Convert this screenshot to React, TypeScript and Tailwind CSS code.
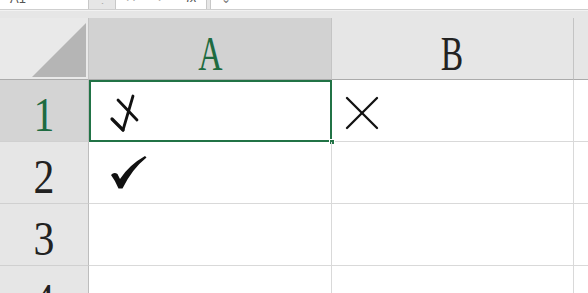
const GREEN = "text-[#1e6b41]";

function ColHeader({ label, selected, w }: { label: string; selected?: boolean; w: string }) {
  return (
    <div
      className={`${w} h-[62px] flex items-end justify-center pb-[1px] border-r border-b border-r-[#c4c4c4] border-b-[#ababab] ${
        selected ? "bg-[#d2d2d2] " + GREEN : "bg-[#e6e6e6] text-[#222]"
      }`}
    >
      <span className="inline-block text-[48px] leading-none scale-x-[0.7]">{label}</span>
    </div>
  );
}

function RowHeader({ n, selected }: { n: number; selected?: boolean }) {
  return (
    <div
      className={`w-[89px] h-[62px] shrink-0 flex items-end justify-center pb-[2px] border-r border-b border-r-[#bdbdbd] border-b-[#d0d0d0] ${
        selected ? "bg-[#d4d4d4] " + GREEN : "bg-[#e6e6e6] text-[#222]"
      }`}
    >
      <span className="inline-block text-[48px] leading-none scale-x-[0.87]">{n}</span>
    </div>
  );
}

function CrossedCheck() {
  return (
    <svg width="32" height="40" viewBox="0 0 32 40" fill="none" stroke="#111" strokeLinecap="round">
      <path d="M4 26 L15 37" strokeWidth="3.2" />
      <path d="M15 37 L25 3" strokeWidth="2.8" />
      <path d="M10 7 L29 27" strokeWidth="2.8" />
    </svg>
  );
}

function BoldCheck() {
  return (
    <svg width="38" height="36" viewBox="0 0 38 36">
      <path
        d="M1 20 Q4 16.5 7.5 19 L10 24 Q19 10 35 1 L36.5 2.5 Q22 14 12.5 33.5 L8.5 33.5 Q5.5 26 1 20 Z"
        fill="#111"
      />
    </svg>
  );
}

function Cross() {
  return (
    <svg width="34" height="34" viewBox="0 0 34 34" stroke="#111" strokeWidth="2.3" strokeLinecap="round">
      <path d="M2 2 L32 32" />
      <path d="M32 2 L2 32" />
    </svg>
  );
}

function Row({ n, selected, a, b }: { n: number; selected?: boolean; a?: React.ReactNode; b?: React.ReactNode }) {
  return (
    <div className="flex">
      <RowHeader n={n} selected={selected} />
      <div className="relative w-[243px] h-[62px] shrink-0 border-r border-b border-[#d9d9d9] flex items-center">
        {a}
        {selected && (
          <>
            <div className="absolute left-0 top-0 -right-[1px] -bottom-[1px] border-2 border-[#217346]" />
            <div className="absolute -right-[4px] -bottom-[4px] w-[6px] h-[6px] bg-[#217346] border border-white" />
          </>
        )}
      </div>
      <div className="w-[242px] h-[62px] shrink-0 border-r border-b border-[#d9d9d9] flex items-center">{b}</div>
      <div className="flex-1 h-[62px] border-b border-[#d9d9d9]" />
    </div>
  );
}

export default function App() {
  return (
    <div className="w-[588px] h-[293px] overflow-hidden bg-white font-['Liberation_Serif',serif]">
      {/* formula bar remnants */}
      <div className="h-[18px] bg-[#e6e6e6] flex flex-col">
        <div className="h-[10px] flex border-b border-[#cfcfcf] font-['Liberation_Sans',sans-serif] text-[#555]">
          <div className="w-[89px] bg-white border-r border-[#c8c8c8] flex items-end pl-[10px] pb-[4px] overflow-hidden">
            <span className="text-[13px] leading-none">A1</span>
          </div>
          <div className="w-[26px] flex items-end justify-center pb-[3px] overflow-hidden text-[#aaa]">
            <span className="text-[11px] leading-none">⋮</span>
          </div>
          <div className="w-[92px] bg-white border-x border-[#c8c8c8] flex items-end justify-around pb-[5px] overflow-hidden text-[#999]">
            <span className="text-[14px] leading-none">✕</span>
            <span className="text-[14px] leading-none">✓</span>
            <span className="text-[13px] leading-none italic text-[#555]">fx</span>
          </div>
          <div className="w-[3px]" />
          <div className="flex-1 bg-white border-l border-[#c8c8c8] flex items-end pl-[10px] pb-[4px] overflow-hidden">
            <span className="text-[12px] leading-none text-[#777]">⌄</span>
          </div>
        </div>
        <div className="flex-1 border-t border-[#f2f2f2]" />
      </div>

      {/* column headers */}
      <div className="flex">
        <div className="w-[89px] h-[62px] shrink-0 bg-[#e9e9e9] border-r border-b border-r-[#c4c4c4] border-b-[#ababab] flex items-end justify-end pr-[2px] pb-[2px]">
          <svg width="54" height="54" viewBox="0 0 54 54">
            <polygon points="0,54 54,0 54,54" fill="#b5b5b5" />
          </svg>
        </div>
        <ColHeader label="A" selected w="w-[243px] shrink-0" />
        <ColHeader label="B" w="w-[242px] shrink-0" />
        <div className="flex-1 h-[62px] bg-[#e6e6e6] border-b border-[#ababab]" />
      </div>

      <Row
        n={1}
        selected
        a={
          <div className="pl-[19px] pt-[4px]">
            <CrossedCheck />
          </div>
        }
        b={
          <div className="pl-[13px] pt-[4px]">
            <Cross />
          </div>
        }
      />
      <Row
        n={2}
        a={
          <div className="pl-[21px]">
            <BoldCheck />
          </div>
        }
      />
      <Row n={3} />
      <Row n={4} />
    </div>
  );
}
